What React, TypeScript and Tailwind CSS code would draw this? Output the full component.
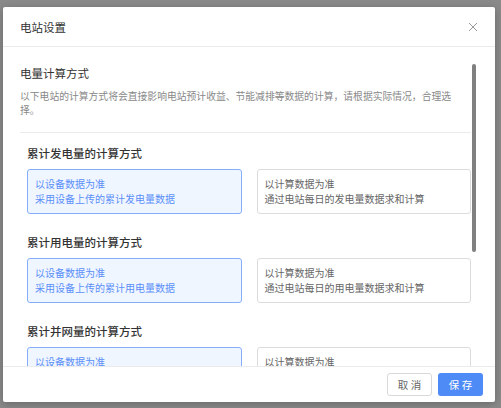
import React from 'react';

type Option = { title: string; desc: string };

const sections: { label: string; options: Option[] }[] = [
  {
    label: '累计发电量的计算方式',
    options: [
      { title: '以设备数据为准', desc: '采用设备上传的累计发电量数据' },
      { title: '以计算数据为准', desc: '通过电站每日的发电量数据求和计算' },
    ],
  },
  {
    label: '累计用电量的计算方式',
    options: [
      { title: '以设备数据为准', desc: '采用设备上传的累计用电量数据' },
      { title: '以计算数据为准', desc: '通过电站每日的用电量数据求和计算' },
    ],
  },
  {
    label: '累计并网量的计算方式',
    options: [
      { title: '以设备数据为准', desc: '采用设备上传的累计并网量数据' },
      { title: '以计算数据为准', desc: '通过电站每日的并网量数据求和计算' },
    ],
  },
];

export default function App() {
  return (
    <div className="h-[408px] w-full overflow-hidden bg-[#8a8a8a] pl-[3px] pt-[7px] font-['Noto_Sans_CJK_SC',sans-serif]">
      <div className="flex h-[395px] w-[492px] flex-col rounded-[2px] bg-white shadow-[0_2px_8px_rgba(0,0,0,0.25)]">
        {/* header */}
        <div className="flex h-[40px] shrink-0 items-center justify-between border-b border-[#ebebeb] pl-[17px] pr-[16px]">
          <span className="text-[11.5px] leading-[16px] text-[#333]">电站设置</span>
          <svg width="10" height="10" viewBox="0 0 10 10" className="mr-[1px]">
            <path d="M1 1L9 9M9 1L1 9" stroke="#999" strokeWidth="1" />
          </svg>
        </div>

        {/* body */}
        <div className="relative flex-1 overflow-hidden pl-[17px] pr-[24px] pt-[18px]">
          <div className="text-[11.5px] leading-[16px] text-[#333]">电量计算方式</div>
          <p className="mt-[9px] text-[9.8px] leading-[13.5px] text-[#888]">
            以下电站的计算方式将会直接影响电站预计收益、节能减排等数据的计算，请根据实际情况，合理选
            <br />
            择。
          </p>
          <div className="mt-[15px] border-t border-[#ebebeb]" />
          <div className="pl-[7px] pt-[12px]">
            {sections.map((s) => (
              <div key={s.label} className="mb-[20px]">
                <div className="text-[11.5px] font-medium leading-[16px] text-[#333]">{s.label}</div>
                <div className="mt-[8px] grid grid-cols-2 gap-[15px]">
                  {s.options.map((o, i) => (
                    <div
                      key={o.title}
                      className={
                        i === 0
                          ? 'h-[45px] rounded-[3px] border border-[#85aefa] bg-[#f0f6ff] px-[7px] py-[6px] text-[10px] leading-[15px] text-[#5b8ff9]'
                          : 'h-[45px] rounded-[3px] border border-[#dcdcdc] bg-white px-[7px] py-[6px] text-[10px] leading-[15px] text-[#666]'
                      }
                    >
                      <div>{o.title}</div>
                      <div>{o.desc}</div>
                    </div>
                  ))}
                </div>
              </div>
            ))}
          </div>
          <div className="absolute right-[19px] top-[17px] h-[188px] w-[4px] rounded-full bg-[#808080]" />
        </div>

        {/* footer */}
        <div className="flex h-[36px] shrink-0 items-center justify-end gap-[6px] border-t border-[#ebebeb] pr-[12px]">
          <button className="h-[23px] w-[45px] rounded-[3px] border border-[#d9d9d9] bg-white text-[10.5px] text-[#666]">
            取 消
          </button>
          <button className="h-[23px] w-[45px] rounded-[3px] bg-[#4e8bf6] text-[10.5px] text-white">
            保 存
          </button>
        </div>
      </div>
    </div>
  );
}
